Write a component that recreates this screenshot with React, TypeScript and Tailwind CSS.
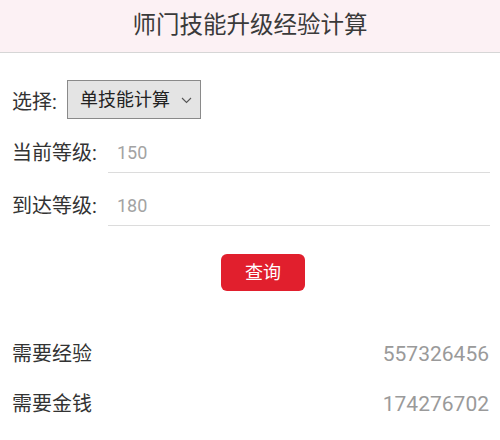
import React, { useState } from 'react';

const App: React.FC = () => {
  const [mode] = useState('单技能计算');
  const [fromLevel, setFromLevel] = useState('150');
  const [toLevel, setToLevel] = useState('180');

  const fields = [
    { label: '当前等级:', value: fromLevel, onChange: setFromLevel },
    { label: '到达等级:', value: toLevel, onChange: setToLevel },
  ];

  const results = [
    { label: '需要经验', value: '557326456' },
    { label: '需要金钱', value: '174276702' },
  ];

  return (
    <div className="w-[500px] h-[440px] bg-white overflow-hidden text-[#333] font-['Roboto','Noto_Sans_CJK_SC',sans-serif]">
      <div className="h-[53px] bg-[#fcf1f4] border-b border-[#d6d6d6] flex items-center justify-center">
        <h1 className="text-[23.5px] leading-none text-[#3a3a3a]">师门技能升级经验计算</h1>
      </div>

      <div className="pl-3 pr-[10px]">
        {/* 计算方式 */}
        <div className="mt-[27px] flex items-center h-[39px]">
          <span className="text-[20px] leading-none w-[55px] pt-1">选择:</span>
          <div className="h-[39px] w-[134px] bg-[#e4e4e4] border border-[#8a8a8a] flex items-center pl-[12px] pr-[8px]">
            <span className="text-[18px] leading-none flex-1 text-[#222]">{mode}</span>
            <svg width="11" height="7" viewBox="0 0 11 7" className="mt-[2px]">
              <path d="M1 1 L5.5 5.5 L10 1" fill="none" stroke="#555" strokeWidth="1.1" />
            </svg>
          </div>
        </div>

        {/* 等级输入 */}
        <div className="mt-[13px] flex flex-col gap-[12px]">
          {fields.map(f => (
            <div key={f.label} className="flex items-center h-[41px]">
              <span className="text-[20px] leading-none w-[96px]">{f.label}</span>
              <div className="flex-1 h-[41px] border-b border-[#dcdcdc] flex items-center">
                <input
                  className="w-full pl-[9px] text-[18px] text-[#a3a3a3] outline-none bg-transparent"
                  value={f.value}
                  onChange={e => f.onChange(e.target.value)}
                />
              </div>
            </div>
          ))}
        </div>

        <div className="mt-[28px] pl-[209px]">
          <button className="w-[84px] h-[37px] rounded-[6px] bg-[#e11f2d] text-white text-[18px] leading-none">
            查询
          </button>
        </div>

        {/* 结果 */}
        <div className="mt-[38px] pr-[1px]">
          {results.map(r => (
            <div key={r.label} className="h-[50px] flex items-center justify-between">
              <span className="text-[20px] leading-none">{r.label}</span>
              <span className="text-[21px] leading-none text-[#9a9a9a]">{r.value}</span>
            </div>
          ))}
        </div>
      </div>
    </div>
  );
};

export default App;
